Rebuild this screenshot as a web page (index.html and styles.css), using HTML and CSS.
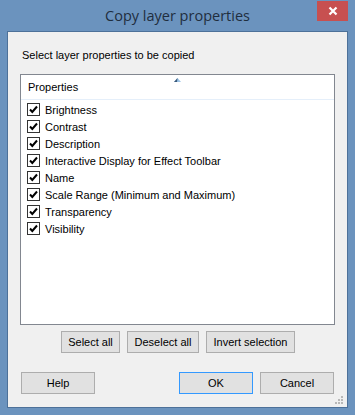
FILE: index.html
```html
<!DOCTYPE html>
<html>
<head>
<meta charset="utf-8">
<link rel="stylesheet" href="styles.css">
</head>
<body>
<div class="window">
  <div class="titlebar">
    <div class="title">Copy layer properties</div>
    <div class="close"><svg width="10" height="10" viewBox="0 0 10 10"><path d="M1.5 1.5 L8.5 8.5 M8.5 1.5 L1.5 8.5" stroke="#fff" stroke-width="2.2"/></svg></div>
  </div>
  <div class="client">
    <div class="label">Select layer properties to be copied</div>
    <div class="listbox">
      <div class="header">
        <span class="htext">Properties</span>
        <svg class="sort" width="7" height="4" viewBox="0 0 7 4"><path d="M3.5 0 L7 4 L0 4 Z" fill="#9cc3e6"/><path d="M3.5 0 L0 4 L3 4 Z" fill="#3c5a7a"/></svg>
      </div>
      <div class="rows">
        <div class="row"><span class="cb"><svg width="11" height="11" viewBox="0 0 11 11"><path d="M2 5.5 L4.3 8 L9 2.5" stroke="#000" stroke-width="2" fill="none"/></svg></span>Brightness</div>
        <div class="row"><span class="cb"><svg width="11" height="11" viewBox="0 0 11 11"><path d="M2 5.5 L4.3 8 L9 2.5" stroke="#000" stroke-width="2" fill="none"/></svg></span>Contrast</div>
        <div class="row"><span class="cb"><svg width="11" height="11" viewBox="0 0 11 11"><path d="M2 5.5 L4.3 8 L9 2.5" stroke="#000" stroke-width="2" fill="none"/></svg></span>Description</div>
        <div class="row"><span class="cb"><svg width="11" height="11" viewBox="0 0 11 11"><path d="M2 5.5 L4.3 8 L9 2.5" stroke="#000" stroke-width="2" fill="none"/></svg></span>Interactive Display for Effect Toolbar</div>
        <div class="row"><span class="cb"><svg width="11" height="11" viewBox="0 0 11 11"><path d="M2 5.5 L4.3 8 L9 2.5" stroke="#000" stroke-width="2" fill="none"/></svg></span>Name</div>
        <div class="row"><span class="cb"><svg width="11" height="11" viewBox="0 0 11 11"><path d="M2 5.5 L4.3 8 L9 2.5" stroke="#000" stroke-width="2" fill="none"/></svg></span>Scale Range (Minimum and Maximum)</div>
        <div class="row"><span class="cb"><svg width="11" height="11" viewBox="0 0 11 11"><path d="M2 5.5 L4.3 8 L9 2.5" stroke="#000" stroke-width="2" fill="none"/></svg></span>Transparency</div>
        <div class="row"><span class="cb"><svg width="11" height="11" viewBox="0 0 11 11"><path d="M2 5.5 L4.3 8 L9 2.5" stroke="#000" stroke-width="2" fill="none"/></svg></span>Visibility</div>
      </div>
    </div>
    <div class="selrow">
      <button class="btn w59">Select all</button>
      <button class="btn w72">Deselect all</button>
      <button class="btn w89">Invert selection</button>
    </div>
    <div class="bottomrow">
      <button class="btn w74">Help</button>
      <div class="spacer"></div>
      <button class="btn w74 default">OK</button>
      <button class="btn w74">Cancel</button>
    </div>
    <svg class="grip" width="9" height="9" viewBox="0 0 9 9">
      <rect x="6" y="0" width="2" height="2" fill="#b8b8b8"/>
      <rect x="3" y="3" width="2" height="2" fill="#b8b8b8"/>
      <rect x="6" y="3" width="2" height="2" fill="#b8b8b8"/>
      <rect x="0" y="6" width="2" height="2" fill="#b8b8b8"/>
      <rect x="3" y="6" width="2" height="2" fill="#b8b8b8"/>
      <rect x="6" y="6" width="2" height="2" fill="#b8b8b8"/>
    </svg>
  </div>
</div>
</body>
</html>
```
FILE: styles.css
```css
html, body {
  margin: 0;
  padding: 0;
  width: 355px;
  height: 415px;
  overflow: hidden;
}
body {
  background: #6b93be;
  font-family: "Liberation Sans", Arial, sans-serif;
  font-size: 11px;
  color: #000;
}
.window {
  width: 355px;
  height: 415px;
  display: flex;
  flex-direction: column;
}
.titlebar {
  height: 31px;
  position: relative;
  display: flex;
  align-items: center;
  justify-content: center;
}
.title {
  font-family: "Open Sans", "Noto Sans", sans-serif;
  font-size: 14.5px;
  color: #1f2e3e;
}
.close {
  position: absolute;
  left: 317px;
  top: 1px;
  width: 31px;
  height: 20px;
  background: #c75050;
  display: flex;
  align-items: center;
  justify-content: center;
}
.close svg { display: block; }
.client {
  margin: 0 7px 7px 7px;
  height: 375px;
  border: 1px solid #4d7199;
  background: #f0f0f0;
  position: relative;
  display: flex;
  flex-direction: column;
}
.label {
  margin: 17px 0 0 14px;
  height: 13px;
  line-height: 13px;
}
.listbox {
  margin: 12px 0 0 12px;
  width: 313px;
  height: 249px;
  border: 1px solid #828790;
  background: #fff;
  display: flex;
  flex-direction: column;
}
.header {
  height: 24px;
  border-bottom: 1px solid #e5effa;
  position: relative;
  display: flex;
  align-items: center;
  padding-left: 7px;
}
.htext { line-height: 13px; margin-top: 1px; }
.sort {
  position: absolute;
  left: 153px;
  top: 3px;
  display: block;
}
.rows {
  padding-top: 1px;
  display: flex;
  flex-direction: column;
}
.row {
  height: 17px;
  display: flex;
  align-items: center;
  padding-left: 6px;
  white-space: nowrap;
}
.cb {
  width: 11px;
  height: 11px;
  border: 1px solid #333;
  background: #fff;
  margin-right: 5px;
  display: flex;
}
.cb svg { display: block; }
.selrow {
  margin-top: 6px;
  display: flex;
  justify-content: center;
  gap: 7px;
  padding-left: 1px;
}
.bottomrow {
  margin-top: 19px;
  display: flex;
  gap: 7px;
  padding: 0 13px 0 13px;
}
.spacer { flex: 1; }
.btn {
  height: 22px;
  padding: 0;
  margin: 0;
  border: 1px solid #adadad;
  background: #e1e1e1;
  font-family: "Liberation Sans", Arial, sans-serif;
  font-size: 11px;
  color: #000;
  border-radius: 0;
}
.btn.default { border-color: #3399ff; }
.w59 { width: 59px; }
.w72 { width: 72px; }
.w89 { width: 89px; }
.w74 { width: 74px; }
.grip {
  position: absolute;
  right: 3px;
  bottom: 2px;
  display: block;
}
```
